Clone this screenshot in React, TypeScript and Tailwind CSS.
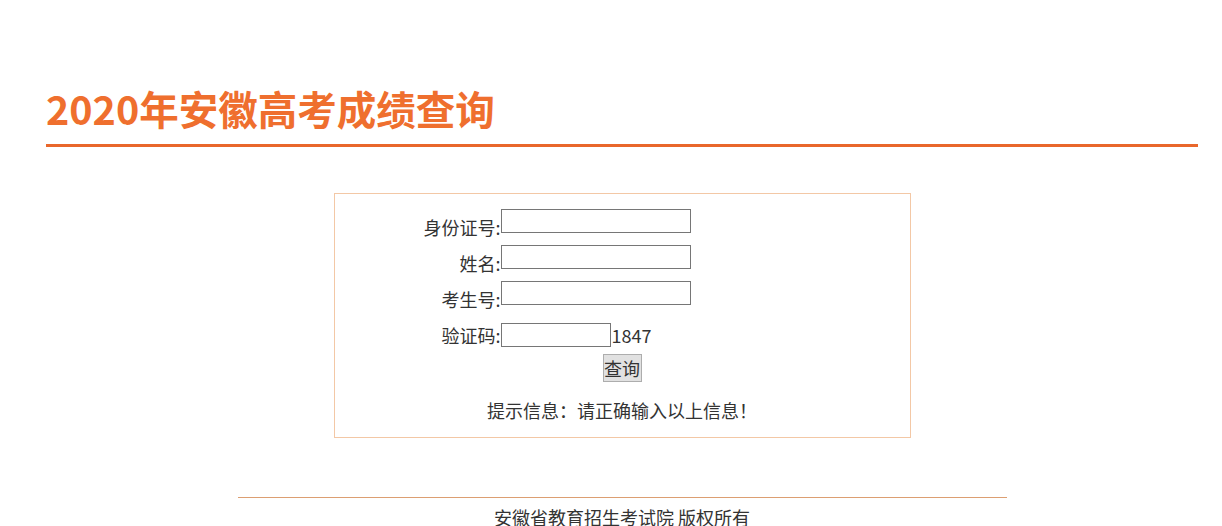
import { useState } from "react";

const font = { fontFamily: '"Noto Sans CJK SC", "Noto Sans", sans-serif' };

function Field({ label, width = "w-[190px]", shift = true, children }: { label: string; width?: string; shift?: boolean; children?: React.ReactNode }) {
    return (
        <div className="flex items-start">
            <span className={`w-[166px] shrink-0 text-right text-[18px] leading-[24px] text-[#333] ${shift ? "translate-y-[6px]" : ""}`}>
                {label}:
            </span>
            <input className={`${width} h-[24px] border border-[#767676] bg-white px-1 text-[13px] outline-none`} />
            {children}
        </div>
    );
}

export default function App() {
    const [msg] = useState("提示信息：请正确输入以上信息！");

    return (
        <div className="min-h-[526px] bg-white" style={font}>
            <div className="ml-[46px] w-[1152px]">
                <h1 className="pt-[88px] text-[39.5px] font-bold leading-[40px] text-[#ef6f2e]">
                    2020年安徽高考成绩查询
                </h1>
                <div className="mt-[16px] h-[3px] bg-[#e9672b]" />

                <div className="mx-auto mt-[46px] w-[577px] border border-[#f3c8a6] pt-[15px] pb-[15px]">
                    <div className="flex flex-col gap-[12px]">
                        <Field label="身份证号" />
                        <Field label="姓名" />
                        <Field label="考生号" />
                    </div>
                    <div className="mt-[18px]">
                        <Field label="验证码" width="w-[110px]" shift={false}>
                            <span className="pl-[1px] text-[18px] leading-[24px] text-[#333]">1847</span>
                        </Field>
                    </div>
                    <div className="mt-[7px] flex justify-center">
                        <button className="h-[28px] w-[39px] border border-[#adadad] bg-[#e1e1e1] text-[18px] leading-[24px] text-[#333]">
                            查询
                        </button>
                    </div>
                    <p className="mt-[16px] text-center text-[18px] leading-[24px] text-[#333]">{msg}</p>
                </div>

                <div className="mx-auto mt-[59px] h-px w-[769px] bg-[#dc9f72]" />
                <p className="mt-[7px] text-center text-[18px] leading-[24px] text-[#333]">
                    安徽省教育招生考试院 版权所有
                </p>
            </div>
        </div>
    );
}
